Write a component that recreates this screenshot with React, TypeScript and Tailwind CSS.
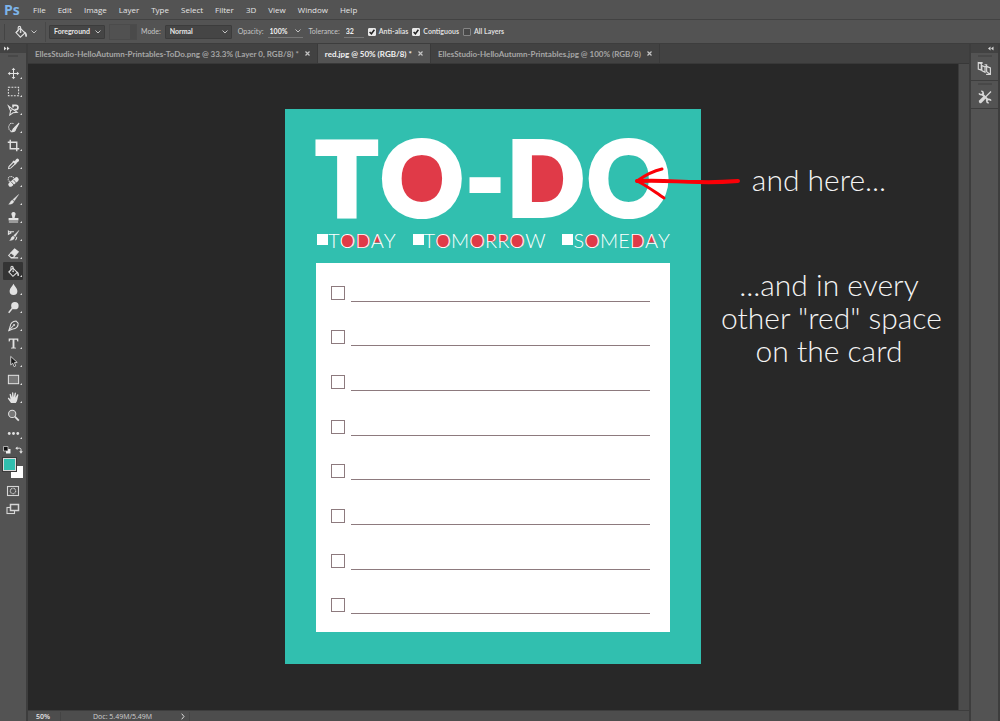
import { useState } from "react";
import type { ReactNode } from "react";
import { clsx } from "clsx";

const MENUS = ["File", "Edit", "Image", "Layer", "Type", "Select", "Filter", "3D", "View", "Window", "Help"];

const TABS = [
  "EllesStudio-HelloAutumn-Printables-ToDo.png @ 33.3% (Layer 0, RGB/8) *",
  "red.jpg @ 50% (RGB/8) *",
  "EllesStudio-HelloAutumn-Printables.jpg @ 100% (RGB/8)",
];

function Icon({ children, className = "size-[14px]" }: { children: ReactNode; className?: string }) {
  return (
    <svg
      viewBox="0 0 14 14"
      className={className}
      fill="none"
      stroke="currentColor"
      strokeWidth="1.1"
      aria-hidden="true"
    >
      {children}
    </svg>
  );
}

const BUCKET = (
  <>
    <path d="M6.2 3.2 11 8l-4.6 4.2L2 7.6Z" />
    <path d="M4.2 5.6V2.6a1.2 1.2 0 0 1 2.4 0v3.6M2 7.6l2.2-2" />
    <circle cx="6.6" cy="7" r=".9" fill="currentColor" stroke="none" />
    <path d="M10 6.600c2 .4 3 2 3 4.600-.6.9-1.900.6-1.800-.5.1-1.300-.4-2.300-1.200-4.100Z" fill="currentColor" stroke="none" />
  </>
);

const TOOLS: { name: string; icon: ReactNode; plain?: boolean }[] = [
  {
    name: "Move",
    icon: (
      <>
        <path d="M7 2.500v9M2.500 7h9" />
        <path d="M7 .8 9 3.300H5ZM7 13.200 5 10.700h4ZM.8 7l2.500-2v4ZM13.200 7l-2.500 2V5Z" fill="currentColor" stroke="none" />
      </>
    ),
  },
  { name: "Marquee", icon: <rect x="1.500" y="2.500" width="11" height="9" strokeDasharray="2 1.300" /> },
  {
    name: "Lasso",
    icon: (
      <>
        <path d="M1.500 3 6 6.500l5 3.500-4.500.5L3 13l.8-4.500ZM3.800 8.500 6 6.500" />
        <path d="M6.500 4.800V2.500h3a2.300 2.300 0 0 1 0 4.600H8" strokeWidth="1.800" />
      </>
    ),
  },
  {
    name: "Quick selection",
    icon: (
      <>
        <path d="M7 2.800A3.700 4.300 0 1 0 6 11" strokeDasharray="1.400 .8" />
        <path d="M13 2.200 9.600 8.300 8.200 7ZM7.800 7.500l1.500 1.400c-.3 2-2 2.800-4.300 2.600 1.300-.8.900-3 2.800-4Z" fill="currentColor" />
      </>
    ),
  },
  { name: "Crop", icon: <path d="M3.500.8v9.700h9.700M.8 3.500h9.700v9.700" strokeWidth="1.500" /> },
  {
    name: "Eyedropper",
    icon: (
      <>
        <path d="m7.600 4.600 2 2L4 12l-2.300.5.4-2.200Z" />
        <path d="M6.500 4.500 9.600 7.600M8.300 5.800l2.200-2.800c1-1 2.300.3 1.300 1.300L9 6.500Z" strokeWidth="1.700" fill="currentColor" />
      </>
    ),
  },
  {
    name: "Healing brush",
    icon: (
      <>
        <circle cx="4.300" cy="4.500" r="3" strokeDasharray="1.200 .8" />
        <path d="m3.800 10.200 6.400-5.400" strokeWidth="4.800" strokeLinecap="round" />
        <path d="m4.500 7.300 3 3.500M7 5.200 9.800 8.500" stroke="#444" strokeWidth=".8" />
      </>
    ),
  },
  {
    name: "Brush",
    icon: <path d="M12.600 1.500 8 8.400 6.400 7ZM5.800 7.600l1.600 1.500c-.5 2.400-2.900 3-5.600 3 1.800-.8 1.500-3.500 4-4.500Z" fill="currentColor" strokeWidth=".4" />,
  },
  {
    name: "Clone stamp",
    icon: <path d="M7 1a2.200 2.200 0 0 1 2 3.300L8.300 6.500v1h4v2.700H1.700V7.500h4v-1L5 4.300A2.200 2.200 0 0 1 7 1ZM2 11.300h10v1.200H2Z" fill="currentColor" stroke="none" />,
  },
  {
    name: "History brush",
    icon: (
      <>
        <path d="M12.900 1.500 8.800 8.400 7.200 7ZM6.600 7.600l1.500 1.500c-.5 2.400-2.600 3.200-5.300 3.200 1.800-.8 1.300-3.700 3.800-4.700Z" fill="currentColor" strokeWidth=".4" />
        <path d="M7.500 3H3.200M1.500 5.700V2.200l2.700 2ZM10.500 8.500a4 4 0 0 1-1.500 3.500" />
      </>
    ),
  },
  {
    name: "Eraser",
    icon: (
      <>
        <path d="m8.200 2 4 3.300-3.800 4.200L4.300 6.200Z" fill="currentColor" />
        <path d="M4.300 6.200 1.800 9l2.400 2.200h2.600l1.600-1.700M4 11.700h8" />
      </>
    ),
  },
  { name: "Paint bucket", icon: BUCKET },
  { name: "Blur", icon: <path d="M7 .8c1 2.500 4.200 4.800 4.200 7.900a4.200 4.200 0 0 1-8.400 0C2.800 5.600 6 3.300 7 .8Z" fill="currentColor" stroke="none" /> },
  {
    name: "Dodge",
    icon: (
      <>
        <circle cx="8.500" cy="5" r="4" fill="currentColor" stroke="none" />
        <path d="m6 7.600-4.200 5" strokeWidth="1.600" />
      </>
    ),
  },
  {
    name: "Pen",
    icon: (
      <>
        <path d="M9.800 2.200 12 4.600c.3 3.500-2.200 6-5.800 6.200L2 12.500l1.400-4.400c.4-3.700 2.700-5.700 6.400-5.900Z" />
        <path d="M2 12.500 7 7" />
        <circle cx="7.600" cy="6.500" r="1.100" fill="currentColor" stroke="none" />
      </>
    ),
  },
  { name: "Type", icon: <path d="M1.800 1.500h10.400v3.300h-1L10.500 3H8v8.200l1.700.4v.9H4.300v-.9l1.700-.4V3H3.500l-.7 1.800h-1Z" fill="currentColor" stroke="none" /> },
  { name: "Path selection", icon: <path d="M4 1.500v9.200l2.200-1.900L7.600 12.500l1.800-.8L8 8.200l3-.2Z" fill="#1c1c1c" strokeWidth=".9" /> },
  { name: "Rectangle", icon: <rect x="1.500" y="2.500" width="11" height="9" fill="#777" /> },
  {
    name: "Hand",
    icon: (
      <path
        d="M4.300 13 1 8.300c-.3-1 .9-1.300 1.500-.5l1.300 1.300L2.800 3.900c-.1-1 1.100-1.200 1.400-.3L5.500 7l-.1-5c0-1 1.300-1 1.400 0l.4 4.800L8.300 2.100c.2-.9 1.500-.7 1.400.3L9 7.300 10.900 4c.5-.8 1.600-.3 1.300.6-1 3-.6 6-2.700 8.400Z"
        fill="currentColor"
        stroke="none"
      />
    ),
  },
  {
    name: "Zoom",
    plain: true,
    icon: (
      <>
        <circle cx="5.600" cy="5.300" r="3.900" fill="#777" />
        <path d="m8.500 8.300 4.200 4.300" strokeWidth="1.900" />
      </>
    ),
  },
  {
    name: "More tools",
    icon: (
      <g fill="currentColor" stroke="none">
        <circle cx="2.400" cy="7" r="1.500" />
        <circle cx="7" cy="7" r="1.500" />
        <circle cx="11.600" cy="7" r="1.500" />
      </g>
    ),
  },
];

function Chevron() {
  return (
    <svg viewBox="0 0 6 4" className="h-1 w-[6px]" fill="none" stroke="#c4c4c4" aria-hidden="true">
      <path d="m.5.5 2.500 2.500L5.500.5" />
    </svg>
  );
}

function SelectBox({ label, value, width }: { label: string; value: string; width: string }) {
  return (
    <span className={clsx("relative flex h-[14px] items-center rounded-[1px] border border-[#3c3c3c] bg-[#454545]", width)}>
      <select aria-label={label} className="h-full w-full appearance-none bg-transparent pl-1 font-bold text-[#e6e6e6] outline-none">
        <option>{value}</option>
      </select>
      <span className="pointer-events-none absolute right-[3px]">
        <Chevron />
      </span>
    </span>
  );
}

function OptionCheck({ label, checked = false }: { label: string; checked?: boolean }) {
  return (
    <label className="flex items-center gap-[3px] font-bold text-[#dedede]">
      <span className="relative flex size-2">
        <input
          type="checkbox"
          defaultChecked={checked}
          className="peer size-2 appearance-none rounded-[1px] border border-[#858585] bg-[#484848] checked:border-[#e8e8e8] checked:bg-[#e8e8e8]"
        />
        <svg viewBox="0 0 8 8" className="pointer-events-none absolute inset-0 hidden peer-checked:block" fill="none" stroke="#222" strokeWidth="1.500" aria-hidden="true">
          <path d="m1.600 4 1.800 1.800 3-4" />
        </svg>
      </span>
      {label}
    </label>
  );
}

function OptionsBar() {
  return (
    <div className="flex h-6 shrink-0 items-center border-t border-[#424242] bg-[#535353] font-['Lato','Open_Sans',sans-serif] text-[7px] text-[#c6c6c6]">
      <span className="ml-1 h-4 w-px bg-[#444]" />
      <button aria-label="Paint bucket options" className="ml-[9px] flex items-center gap-[3px] text-[#e0e0e0]">
        <Icon>{BUCKET}</Icon>
        <Chevron />
      </button>
      <span className="ml-2 h-5 w-px bg-[#484848]" />
      <span className="ml-[3px] flex">
        <SelectBox label="Fill source" value="Foreground" width="w-[56px]" />
      </span>
      <span className="ml-1 h-4 w-7 border border-[#4b4b4b] bg-[#515151]">
        <span className="ml-5 block h-full w-1.5 bg-[#4a4a4a]" />
      </span>
      <span className="mr-1 ml-1">Mode:</span>
      <SelectBox label="Mode" value="Normal" width="w-[67px]" />
      <label className="ml-[6px] flex items-center gap-1">
        Opacity:
        <input defaultValue="100%" className="h-3 w-[26px] border-b border-[#767676] bg-transparent pl-[2px] font-bold text-[#f0f0f0] outline-none" />
      </label>
      <button aria-label="Opacity slider" className="flex h-3 w-[9px] items-center justify-center border-b border-[#767676]">
        <Chevron />
      </button>
      <label className="ml-[6px] flex items-center gap-1">
        Tolerance:
        <input defaultValue="32" className="h-3 w-[20px] border-b border-[#767676] bg-transparent pl-[2px] font-bold text-[#f0f0f0] outline-none" />
      </label>
      <div className="ml-1 flex items-center gap-1">
        <OptionCheck label="Anti-alias" checked />
        <OptionCheck label="Contiguous" checked />
        <OptionCheck label="All Layers" />
      </div>
    </div>
  );
}

function Toolbar() {
  const [tool, setTool] = useState("Paint bucket");
  return (
    <aside className="flex w-[26px] shrink-0 flex-col bg-[#535353]">
      <button aria-label="Expand tools" className="h-[9px] shrink-0 bg-[#424242] pl-1 text-[#ddd]">
        <svg viewBox="0 0 6 5" className="h-[5px] w-[6px]" fill="currentColor" aria-hidden="true">
          <path d="M0 .5 2.500 2.500 0 4.500ZM3 .5l2.500 2L3 4.500Z" />
        </svg>
      </button>
      <span className="mx-2 mt-[2px] h-[2px] shrink-0 bg-[#484848]" />
      <div className="mt-[7px] flex flex-col text-[#e2e2e2]">
        {TOOLS.map(({ name, icon, plain }) => (
          <button
            key={name}
            aria-label={name}
            onClick={() => setTool(name)}
            className={clsx(
              "relative mx-[3px] flex h-[18px] items-center justify-center",
              tool === name && "rounded-[1px] bg-[#343434]",
            )}
          >
            <Icon className="size-[13px]">{icon}</Icon>
            {!plain && (
              <svg viewBox="0 0 2 2" className="absolute right-[1px] bottom-[3px] size-[2px]" fill="currentColor" aria-hidden="true">
                <path d="M2 0v2H0Z" />
              </svg>
            )}
          </button>
        ))}
      </div>
      <div className="mt-1 flex justify-between px-[3px] text-[#e2e2e2]">
        <button aria-label="Default colors">
          <svg viewBox="0 0 8 8" className="size-2" aria-hidden="true">
            <path d="M3 3h4.500v4.500H3Z" fill="#eee" />
            <path d="M.5.5H5V5H.5Z" fill="#111" stroke="#ddd" strokeWidth=".7" />
          </svg>
        </button>
        <button aria-label="Swap colors">
          <svg viewBox="0 0 8 8" className="size-2" fill="none" stroke="currentColor" aria-hidden="true">
            <path d="M1.500 2.200h3.200q1.300 0 1.300 1.300V6" />
            <path d="M2.500.5v3.400L.3 2.200ZM4.200 5.300h3.600L6 7.700Z" fill="currentColor" stroke="none" />
          </svg>
        </button>
      </div>
      <div className="relative mx-[3px] mt-1 h-5">
        <button aria-label="Background color" className="absolute right-0 bottom-0 size-3 bg-white" />
        <button aria-label="Foreground color" className="absolute top-0 left-0 size-[13px] border border-[#d9d9d9] bg-[#31bfaf] outline outline-[#3a3a3a]" />
      </div>
      <div className="mt-1 flex flex-col items-center text-[#d5d5d5]">
        <button aria-label="Quick mask" className="flex h-[18px] items-center">
          <Icon>
            <rect x="1.500" y="2.500" width="11" height="9" />
            <circle cx="7" cy="7" r="2.700" strokeDasharray="1 .5" />
          </Icon>
        </button>
        <button aria-label="Screen mode" className="flex h-[18px] items-center">
          <Icon>
            <rect x="1" y="5.500" width="7.500" height="6" />
            <rect x="4.500" y="2.500" width="8" height="6" fill="#535353" strokeWidth="1.500" />
          </Icon>
        </button>
      </div>
    </aside>
  );
}

function TabStrip() {
  const [active, setActive] = useState(1);
  return (
    <div className="flex h-5 shrink-0 border-b border-[#383838] bg-[#424242] font-['Lato','Open_Sans',sans-serif] text-[8px] font-bold">
      {TABS.map((tab, i) => (
        <div
          key={tab}
          className={clsx(
            "flex items-center gap-[6px] border-r border-[#3a3a3a] px-[7px] whitespace-nowrap",
            i === active ? "bg-[#535353] text-[#f2f2f2]" : "text-[#a6a6a6]",
          )}
        >
          <button onClick={() => setActive(i)}>{tab}</button>
          <button aria-label="Close tab">
            <svg viewBox="0 0 5 5" className="size-[5px]" stroke="#c4c4c4" strokeWidth="1.200" aria-hidden="true">
              <path d="m.5.5 4 4M4.500.5l-4 4" />
            </svg>
          </button>
        </div>
      ))}
    </div>
  );
}

// red fills that sit behind the counters of the thin letters
const COUNTERS: Record<string, string> = {
  O: "inset-x-[1px] top-[4px] h-[14px] rounded-full",
  D: "left-[2px] right-[1px] top-[4px] h-[14px] rounded-r-full",
  A: "inset-x-[1px] top-[4px] h-[9px] [clip-path:polygon(50%_0,85%_100%,15%_100%)]",
  R: "left-[2px] right-[1px] top-[4px] h-[8px] rounded-r-full",
};

function ThinWord({ word }: { word: string }) {
  return (
    <span className="flex items-center">
      <span className="size-[11px] bg-white" />
      <span className="flex">
        {word.split("").map((letter, i) => (
          <span key={i} className="relative">
            {COUNTERS[letter] && <span className={clsx("absolute bg-[#e03a48]", COUNTERS[letter])} />}
            <span className="relative">{letter}</span>
          </span>
        ))}
      </span>
    </span>
  );
}

function TodoCard() {
  return (
    <article className="flex min-h-[555px] w-[416px] flex-col bg-[#31bfaf] px-[31px] pt-[30px] pb-8 font-['Lato',sans-serif] text-white">
      <h1 className="flex justify-between text-[102px] leading-[76px] font-black [-webkit-text-stroke:4px_white] [stroke-linejoin:round]">
        <span>T</span>
        <span className="relative">
          <span className="absolute top-[12px] left-1/2 h-[55px] w-[50px] -translate-x-1/2 rounded-full bg-[#e03a48]" />
          <span className="relative">O</span>
        </span>
        <span>-</span>
        <span className="relative">
          <span className="absolute top-[12px] left-[16px] h-[56px] w-[48px] rounded-r-[28px] bg-[#e03a48]" />
          <span className="relative">D</span>
        </span>
        <span>O</span>
      </h1>
      <div className="mt-[15px] flex justify-between pl-[1px] text-[20px] leading-5 font-light">
        <ThinWord word="TODAY" />
        <ThinWord word="TOMORROW" />
        <ThinWord word="SOMEDAY" />
      </div>
      <ul className="mt-[13px] flex flex-1 flex-col justify-between bg-white pt-[23px] pr-5 pb-[17px] pl-[15px]">
        {Array.from({ length: 8 }, (_, i) => (
          <li key={i} className="flex h-4 gap-[6px]">
            <input type="checkbox" aria-label={`Item ${i + 1}`} className="size-[14px] shrink-0 appearance-none border border-[#8d7a7e] bg-white checked:bg-[#31bfaf]" />
            <span className="flex-1 border-b border-[#8d7a7e]" />
          </li>
        ))}
      </ul>
    </article>
  );
}

function Canvas() {
  return (
    <main className="flex flex-1 items-center justify-center overflow-hidden bg-[#282828] pb-[2px]">
      <div className="relative">
        <TodoCard />
        <svg viewBox="0 0 110 36" className="absolute top-[56px] left-[348px] h-9 w-[110px]" fill="none" stroke="#fb0007" strokeLinecap="round" strokeLinejoin="round" aria-hidden="true">
          <path d="M4 16c30-1 40 1 62 1 14 .5 25 0 39-1" strokeWidth="4" />
          <path d="M29 4C20 6 11 11 4 16c9 4 19 12 27 17" strokeWidth="3" />
        </svg>
        {/* notes pinned to the right of the card */}
        <div className="absolute top-[54px] left-full w-[236px] text-center font-['Lato',sans-serif] text-[30px] leading-[33px] font-light whitespace-nowrap text-[#f4f4f4]">
          <p>and here...</p>
          <p className="mt-[72px] pl-5">
            ...and in every
            <br />
            other "red" space
            <br />
            on the card
          </p>
        </div>
      </div>
    </main>
  );
}

function RightDock() {
  return (
    <aside className="flex w-[31px] shrink-0 flex-col border-x-2 border-[#3d3d3d] bg-[#535353] text-[#d8d8d8]">
      <button aria-label="Expand panels" className="flex h-[9px] shrink-0 items-center justify-end bg-[#424242] pr-1">
        <svg viewBox="0 0 6 5" className="h-[5px] w-[6px]" fill="currentColor" aria-hidden="true">
          <path d="M2.500.5 0 2.500l2.500 2ZM5.500.5 3 2.500l2.500 2Z" />
        </svg>
      </button>
      <button aria-label="History" className="flex h-[28px] flex-col items-center border-b border-[#3d3d3d] pt-[2px]">
        <span className="mb-[4px] h-[2px] w-[14px] bg-[#484848]" />
        <Icon className="size-[15px]">
          <path d="M1.200 1.500 4 2.500v6L1.200 7.500ZM1.200 1.500h3.500v1M4 4l3.500 1.500v5L4.500 9V4M7.500 5.500l1.500-1v-1H7M9 5l3.500 1.500v6H8.500M9 5v5l3.500 2.500" />
        </Icon>
      </button>
      <button aria-label="Tool presets" className="flex h-[28px] flex-col items-center border-b border-[#3d3d3d] pt-[2px]">
        <span className="mb-[5px] h-[2px] w-[14px] bg-[#484848]" />
        <Icon>
          <path d="m4 4 6 6" strokeWidth="2.200" />
          <path d="M1 3.300A2.400 2.400 0 0 0 5.300 3.300 2.400 2.400 0 0 0 3.300 1M13 10.700a2.400 2.400 0 0 0-4.300 0 2.400 2.400 0 0 0 2 2.300" strokeWidth="1.600" />
          <path d="m13 1.500-6 6" strokeWidth="1.300" />
          <path d="m5.500 8.500-3 3" strokeWidth="3.200" strokeLinecap="round" />
        </Icon>
      </button>
    </aside>
  );
}

export default function App() {
  return (
    <div className="flex h-screen min-h-[640px] flex-col overflow-hidden bg-[#535353] font-['Open_Sans','Noto_Sans',sans-serif] text-[#e4e4e4]">
      <header className="flex h-[19px] shrink-0 items-center">
        <span className="ml-1 w-[29px] text-[14px] leading-none font-bold text-[#7db4ea]">Ps</span>
        <nav className="flex gap-3 text-[8px] font-medium">
          {MENUS.map((menu) => (
            <button key={menu}>{menu}</button>
          ))}
        </nav>
      </header>
      <OptionsBar />
      <div className="flex min-h-0 flex-1 border-t border-[#3d3d3d]">
        <Toolbar />
        <section className="flex min-w-0 flex-1 flex-col border-l-2 border-[#3d3d3d]">
          <TabStrip />
          <div className="flex min-h-0 flex-1">
            <Canvas />
            <div className="w-[11px] shrink-0 border-l border-[#3a3a3a] bg-[#4b4b4b]" />
          </div>
          <footer className="flex h-[11px] shrink-0 items-center border-t border-[#3d3d3d] bg-[#4d4d4d] text-[7px] leading-none">
            <span className="w-8 pl-2 font-semibold">50%</span>
            <span className="flex flex-1 items-center border-l border-[#444] pl-8">
              <span className="w-[88px] text-[#d0d0d0]">Doc: 5.49M/5.49M</span>
              <svg viewBox="0 0 4 7" className="h-[7px] w-1" fill="none" stroke="#ddd" aria-hidden="true">
                <path d="M.7.7 3 3.500.7 6.300" />
              </svg>
              <span className="ml-1 h-[9px] w-px bg-[#444]" />
            </span>
          </footer>
        </section>
        <RightDock />
      </div>
    </div>
  );
}
